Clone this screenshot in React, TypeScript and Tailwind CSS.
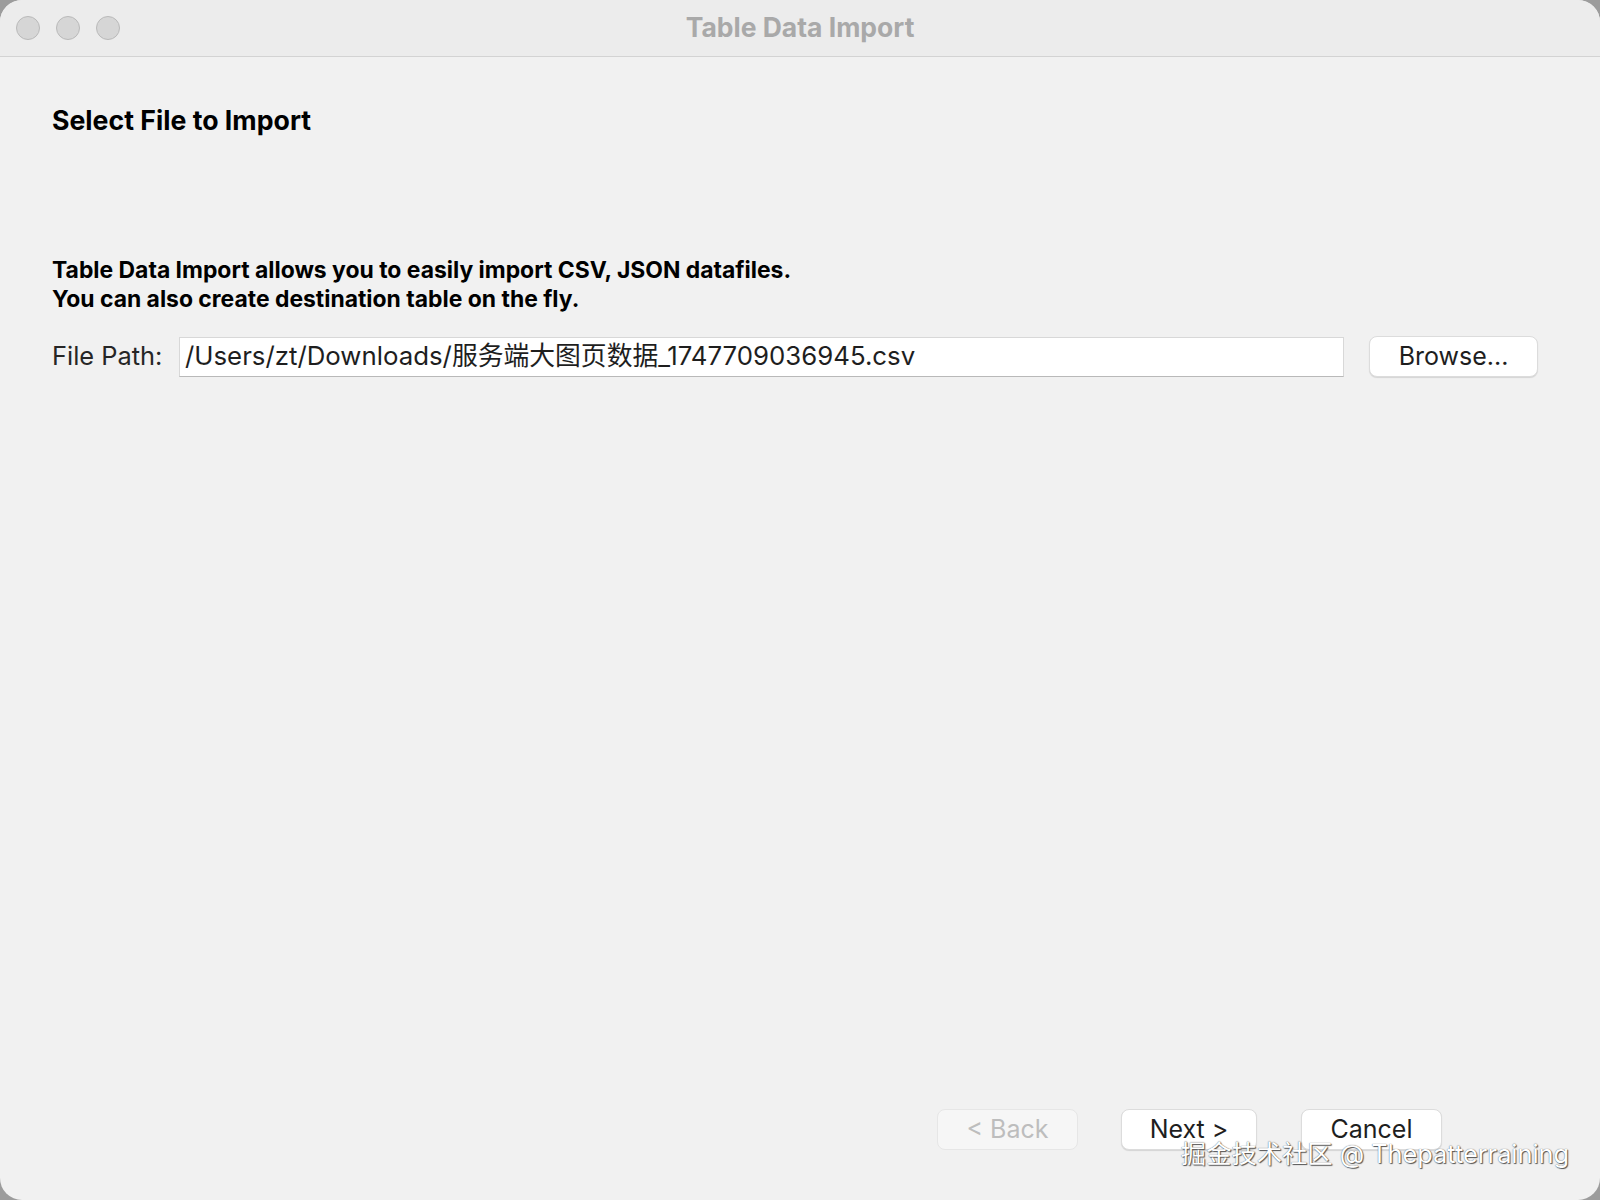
import React from "react";

const sans = "font-['Inter','Noto_Sans_CJK_SC',sans-serif]";

function TrafficLight() {
  return <div className="h-6 w-6 rounded-full border border-[#b9b9b9] bg-[#d6d6d6]" />;
}

function MacButton({ label, disabled }: { label: string; disabled?: boolean }) {
  return (
    <button
      className={
        "flex h-[41px] w-full items-center justify-center rounded-[8px] border text-[25px] " +
        (disabled
          ? "border-[#e6e6e6] bg-[#f6f6f6] text-[#bdbdbd]"
          : "border-[#dcdcdc] bg-white text-[#1e1e1e] shadow-[0_1px_1px_rgba(0,0,0,0.12)]")
      }
    >
      {label}
    </button>
  );
}

export default function App() {
  return (
    <div className={"h-[1200px] w-[1600px] bg-[#9c9c9c] " + sans}>
      <div className="relative flex h-full w-full flex-col overflow-hidden rounded-[22px] bg-[#f1f1f1]">
        {/* Title bar */}
        <div className="relative flex h-[57px] shrink-0 items-center border-b border-[#d3d3d3] bg-[#ececec] px-4">
          <div className="flex gap-4">
            <TrafficLight />
            <TrafficLight />
            <TrafficLight />
          </div>
          <div className="absolute inset-x-0 top-0 flex h-[55px] items-center justify-center text-[26.5px] font-bold text-[#a9a9a9]">
            Table Data Import
          </div>
        </div>

        {/* Content */}
        <div className="flex flex-1 flex-col pr-[62px] pl-[52px]">
          <h1 className="mt-[47px] text-[26.7px] leading-8 font-bold text-black">Select File to Import</h1>

          <div className="mt-[120px] text-[22.9px] leading-[29px] font-bold text-black">
            <p>Table Data Import allows you to easily import CSV, JSON datafiles.</p>
            <p>You can also create destination table on the fly.</p>
          </div>

          <div className="mt-[22px] flex items-center">
            <span className="w-[127px] shrink-0 text-[25.4px] text-[#262626]">File Path:</span>
            <div className="flex h-[40px] flex-1 items-center border border-[#d8d8d8] border-b-[#b9b9b9] bg-white px-[5px] text-[25.8px] text-[#1e1e1e]">
              /Users/zt/Downloads/服务端大图页数据_1747709036945.csv
            </div>
            <div className="ml-[25px] w-[169px]">
              <MacButton label="Browse..." />
            </div>
          </div>

          <div className="flex-1" />

          <div className="mb-[50px] flex justify-end pr-[96px]">
            <div className="w-[141px]">
              <MacButton label="< Back" disabled />
            </div>
            <div className="ml-[43px] w-[136px]">
              <MacButton label="Next >" />
            </div>
            <div className="ml-[44px] w-[141px]">
              <MacButton label="Cancel" />
            </div>
          </div>
        </div>

        {/* Watermark */}
        <div className="absolute right-[31px] bottom-[27px] text-[25.3px] text-white [text-shadow:0_0_1px_#444,1px_1px_1px_#555]">
          掘金技术社区 @ Thepatterraining
        </div>
      </div>
    </div>
  );
}
